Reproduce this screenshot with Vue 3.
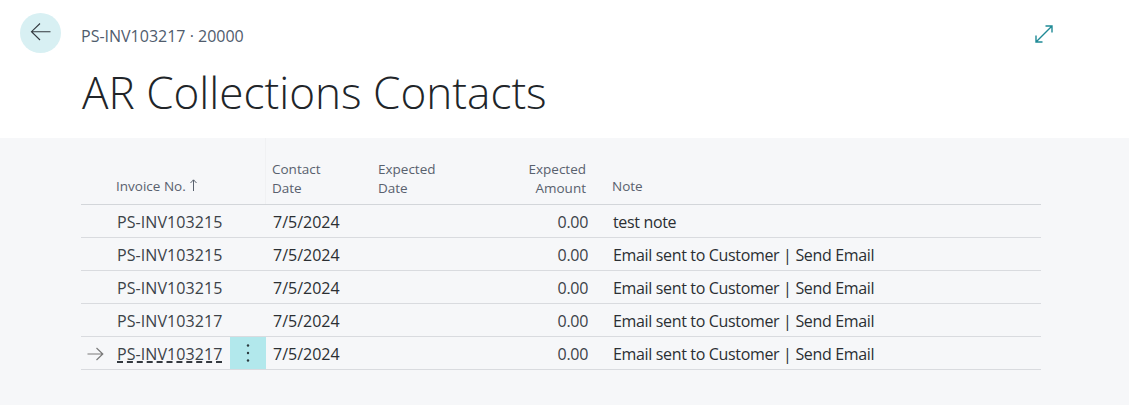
<script setup>
const rows = [
  { invoice: 'PS-INV103215', date: '7/5/2024', amount: '0.00', note: 'test note' },
  { invoice: 'PS-INV103215', date: '7/5/2024', amount: '0.00', note: 'Email sent to Customer | Send Email' },
  { invoice: 'PS-INV103215', date: '7/5/2024', amount: '0.00', note: 'Email sent to Customer | Send Email' },
  { invoice: 'PS-INV103217', date: '7/5/2024', amount: '0.00', note: 'Email sent to Customer | Send Email' },
  { invoice: 'PS-INV103217', date: '7/5/2024', amount: '0.00', note: 'Email sent to Customer | Send Email', active: true }
];
</script>

<template>
  <div class="page">
    <header class="top">
      <div class="crumb-row">
        <button class="back">
          <svg width="24" height="24" viewBox="0 0 24 24" fill="none" stroke="#33393f" stroke-width="1.1">
            <path d="M2.5 10.7H21.5M11 2.5L2.5 10.7L11 19" />
          </svg>
        </button>
        <span class="crumb">PS-INV103217 · 20000</span>
        <svg class="expand" width="18" height="18" viewBox="0 0 18 18" fill="none" stroke="#1f8a96" stroke-width="1.4">
          <path d="M1 17L17 1M10.5 1H17V7.5M1 10.5V17H7.5" />
        </svg>
      </div>
      <h1 class="title">AR Collections Contacts</h1>
    </header>

    <main class="content">
      <div class="grid head">
        <div></div>
        <div class="th single">Invoice No.<span class="sort">
          <svg width="9" height="12" viewBox="0 0 9 12" fill="none" stroke="#59616e" stroke-width="1">
            <path d="M4.5 12V1M1.5 4L4.5 .8L7.5 4" />
          </svg>
        </span></div>
        <div class="th-sep"></div>
        <div class="th">Contact<br />Date</div>
        <div class="th">Expected<br />Date</div>
        <div class="th right">Expected<br />Amount</div>
        <div class="th single note-head">Note</div>
      </div>
      <div v-for="(row, i) in rows" :key="i" class="grid row">
        <div class="marker">
          <svg v-if="row.active" width="18" height="14" viewBox="0 0 18 14" fill="none" stroke="#7a7a7a" stroke-width="1.2">
            <path d="M1.5 7H16.8M10.5 1L16.8 7L10.5 13" />
          </svg>
        </div>
        <div class="td invoice"><span :class="{ link: row.active }">{{ row.invoice }}</span></div>
        <div class="menu" :class="{ on: row.active }">
          <svg v-if="row.active" width="4" height="18" viewBox="0 0 4 18" fill="#2b3a3f">
            <circle cx="2" cy="1.5" r="1.2" />
            <circle cx="2" cy="9" r="1.2" />
            <circle cx="2" cy="16.5" r="1.2" />
          </svg>
        </div>
        <div class="td">{{ row.date }}</div>
        <div class="td"></div>
        <div class="td right">{{ row.amount }}</div>
        <div class="td note">{{ row.note }}</div>
      </div>
    </main>
  </div>
</template>

<style>
html, body { margin: 0; background: #fff; }
</style>

<style scoped>
.page {
  width: 1129px;
  height: 406px;
  display: flex;
  flex-direction: column;
  font-family: "Open Sans", "Noto Sans", sans-serif;
  overflow: hidden;
}

.top {
  height: 138px;
  background: #fff;
  padding: 13px 0 0 20px;
  box-sizing: border-box;
}

.crumb-row {
  display: flex;
  align-items: center;
  height: 40px;
}

.back {
  width: 41px;
  height: 40px;
  border: none;
  border-radius: 50%;
  background: #d8f0f3;
  padding: 0;
  display: flex;
  align-items: center;
  justify-content: center;
}

.crumb {
  margin-left: 20px;
  margin-top: 6px;
  font-size: 16px;
  color: #505c6d;
}

.expand {
  margin-left: auto;
  margin-right: 76px;
  margin-top: 2px;
}

.title {
  margin: 10px 0 0 62px;
  font-size: 44.1px;
  line-height: 58px;
  font-weight: 300;
  color: #212529;
}

.content {
  flex: 1;
  background: #f6f7f9;
  padding: 0 88px 0 81px;
  border-bottom: 1px solid #fff;
}

.grid {
  display: grid;
  grid-template-columns: 30px 119px 36px 106px 106px 128px 435px;
}

.head {
  height: 67px;
  border-bottom: 1px solid #d3d6da;
  box-sizing: border-box;
  align-items: end;
}

.th {
  font-size: 13.5px;
  line-height: 19px;
  color: #59616e;
  padding: 0 6px 6px 6px;
}

.th.single { padding-bottom: 8px; padding-left: 5px; }
.th.note-head { padding-left: 6px; }
.th.right { text-align: right; padding-right: 20px; }

.th-sep {
  height: 66px;
  box-sizing: border-box;
  border-right: 1px solid #f0f1f3;
}

.sort { margin-left: 3px; }

.row {
  height: 33px;
  border-bottom: 1px solid #d9dbdf;
  box-sizing: border-box;
  align-items: center;
  font-size: 16px;
  color: #2b2f33;
}

.marker {
  display: flex;
  padding: 1px 0 0 5px;
}

.td { padding: 2px 7px 0; white-space: nowrap; }
.td.right { text-align: right; padding-right: 18px; color: #3c4248; letter-spacing: -0.3px; }
.td.note { letter-spacing: -0.34px; }
.td.invoice { color: #3c4248; padding-left: 6px; letter-spacing: 0.08px; }

.link {
  text-decoration: underline dashed #33393f;
  text-decoration-thickness: 1.5px;
  text-underline-offset: 1px;
}

.menu {
  height: 100%;
  display: flex;
  align-items: center;
  justify-content: center;
}

.menu.on { background: #b2e8ec; }
</style>
